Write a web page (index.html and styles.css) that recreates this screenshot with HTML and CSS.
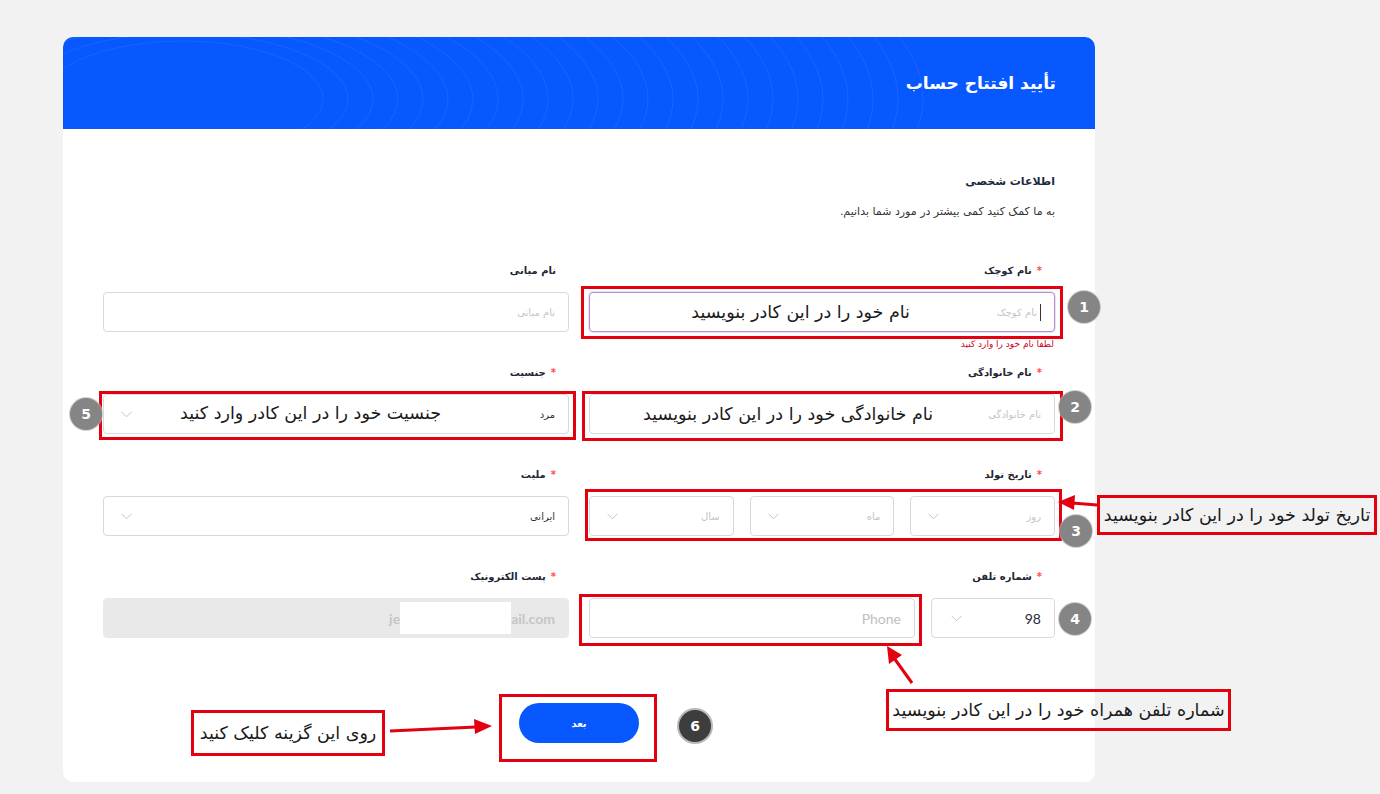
FILE: index.html
```html
<!DOCTYPE html>
<html lang="fa">
<head>
<meta charset="utf-8">
<title>تأیید افتتاح حساب</title>
<link rel="stylesheet" href="styles.css">
</head>
<body>
<div class="page">
  <main class="card">
    <header class="card-head">
      <svg class="waves" width="1032" height="92" viewBox="0 0 1032 92" aria-hidden="true">
        <g fill="none" stroke="#ffffff" stroke-opacity="0.07" stroke-width="1">
          <ellipse cx="120" cy="62" rx="140" ry="58"/>
          <ellipse cx="120" cy="62" rx="165" ry="66"/>
          <ellipse cx="120" cy="62" rx="190" ry="74"/>
          <ellipse cx="120" cy="62" rx="215" ry="82"/>
          <ellipse cx="120" cy="62" rx="240" ry="90"/>
          <ellipse cx="120" cy="62" rx="265" ry="98"/>
          <ellipse cx="120" cy="62" rx="290" ry="106"/>
          <ellipse cx="120" cy="62" rx="315" ry="114"/>
          <ellipse cx="120" cy="62" rx="340" ry="122"/>
          <ellipse cx="120" cy="62" rx="365" ry="130"/>
          <ellipse cx="120" cy="62" rx="390" ry="138"/>
          <ellipse cx="120" cy="62" rx="415" ry="146"/>
          <ellipse cx="120" cy="62" rx="440" ry="154"/>
          <ellipse cx="120" cy="62" rx="465" ry="162"/>
          <ellipse cx="120" cy="62" rx="490" ry="170"/>
          <ellipse cx="120" cy="62" rx="515" ry="178"/>
          <ellipse cx="120" cy="62" rx="540" ry="186"/>
          <ellipse cx="120" cy="62" rx="565" ry="194"/>
          <ellipse cx="120" cy="62" rx="590" ry="202"/>
          <ellipse cx="120" cy="62" rx="615" ry="210"/>
          <ellipse cx="120" cy="62" rx="640" ry="218"/>
          <ellipse cx="120" cy="62" rx="665" ry="226"/>
          <ellipse cx="120" cy="62" rx="690" ry="234"/>
          <ellipse cx="120" cy="62" rx="715" ry="242"/>
          <ellipse cx="120" cy="62" rx="740" ry="250"/>
        </g>
      </svg>
      <h1>تأیید افتتاح حساب</h1>
    </header>

    <section class="card-body">
      <h2>اطلاعات شخصی</h2>
      <p class="lead">به ما کمک کنید کمی بیشتر در مورد شما بدانیم.</p>

      <div class="grid">
        <div class="field">
          <label class="label"><span class="req">*</span>نام کوچک</label>
          <div class="ctl focus"><span class="caret"></span><span class="ph">نام کوچک</span></div>
          <div class="error">لطفا نام خود را وارد کنید</div>
        </div>
        <div class="field">
          <label class="label">نام میانی</label>
          <div class="ctl"><span class="ph">نام میانی</span></div>
        </div>

        <div class="field">
          <label class="label"><span class="req">*</span>نام خانوادگی</label>
          <div class="ctl"><span class="ph">نام خانوادگی</span></div>
        </div>
        <div class="field">
          <label class="label"><span class="req">*</span>جنسیت</label>
          <div class="ctl sel"><span class="val">مرد</span><svg class="chev" width="11" height="7" viewBox="0 0 11 7"><path d="M0.5 0.8l5 5 5-5" fill="none" stroke="#c4c4c4" stroke-width="1"/></svg></div>
        </div>

        <div class="field">
          <label class="label"><span class="req">*</span>تاریخ تولد</label>
          <div class="date">
            <div class="ctl sel"><span class="ph">روز</span><svg class="chev" width="11" height="7" viewBox="0 0 11 7"><path d="M0.5 0.8l5 5 5-5" fill="none" stroke="#c4c4c4" stroke-width="1"/></svg></div>
            <div class="ctl sel"><span class="ph">ماه</span><svg class="chev" width="11" height="7" viewBox="0 0 11 7"><path d="M0.5 0.8l5 5 5-5" fill="none" stroke="#c4c4c4" stroke-width="1"/></svg></div>
            <div class="ctl sel"><span class="ph">سال</span><svg class="chev" width="11" height="7" viewBox="0 0 11 7"><path d="M0.5 0.8l5 5 5-5" fill="none" stroke="#c4c4c4" stroke-width="1"/></svg></div>
          </div>
        </div>
        <div class="field">
          <label class="label"><span class="req">*</span>ملیت</label>
          <div class="ctl sel"><span class="val">ایرانی</span><svg class="chev" width="11" height="7" viewBox="0 0 11 7"><path d="M0.5 0.8l5 5 5-5" fill="none" stroke="#c4c4c4" stroke-width="1"/></svg></div>
        </div>

        <div class="field">
          <label class="label"><span class="req">*</span>شماره تلفن</label>
          <div class="phone">
            <div class="ctl sel code"><span class="num">98</span><svg class="chev" width="11" height="7" viewBox="0 0 11 7"><path d="M0.5 0.8l5 5 5-5" fill="none" stroke="#c4c4c4" stroke-width="1"/></svg></div>
            <div class="ctl tel"><span class="latin-ph">Phone</span></div>
          </div>
        </div>
        <div class="field">
          <label class="label"><span class="req">*</span>پست الکترونیک</label>
          <div class="ctl disabled"><span class="mail">je<span class="redact"></span>ail.com</span></div>
        </div>
      </div>

      <div class="actions">
        <button class="btn" type="button">بعد</button>
      </div>
    </section>
  </main>

  <div class="notes" dir="rtl">
    <svg class="arrows" width="1380" height="794" viewBox="0 0 1380 794" aria-hidden="true">
      <g stroke="#e3000f" stroke-width="3" fill="none">
        <line x1="1097" y1="505" x2="1072" y2="503"/>
        <line x1="912" y1="683" x2="894" y2="658"/>
        <line x1="390" y1="731" x2="476" y2="727"/>
      </g>
      <g fill="#e3000f">
        <polygon points="1058,502 1075,495 1074,510"/>
        <polygon points="887,646 889,664 902,655"/>
        <polygon points="492,726 474,719 475,734"/>
      </g>
    </svg>

    <div class="rbox rb1"></div>
    <div class="rbox rb2"></div>
    <div class="rbox rb5"></div>
    <div class="rbox rb3"></div>
    <div class="rbox rb4"></div>
    <div class="rbox rb6"></div>

    <div class="hint h1t">نام خود را در این کادر بنویسید</div>
    <div class="hint h2t">نام خانوادگی خود را در این کادر بنویسید</div>
    <div class="hint h5t">جنسیت خود را در این کادر وارد کنید</div>

    <div class="rbox callout c3">تاریخ تولد خود را در این کادر بنویسید</div>
    <div class="rbox callout c4">شماره تلفن همراه خود را در این کادر بنویسید</div>
    <div class="rbox callout c6">روی این گزینه کلیک کنید</div>

    <div class="badge b1">1</div>
    <div class="badge b2">2</div>
    <div class="badge b3">3</div>
    <div class="badge b4">4</div>
    <div class="badge b5">5</div>
    <div class="badge dark b6">6</div>
  </div>
</div>
</body>
</html>
```

FILE: styles.css
```css
* { box-sizing: border-box; }

body {
  margin: 0;
  background: #f2f2f2;
  font-family: "DejaVu Sans", "Noto Sans", sans-serif;
}

.page {
  position: relative;
  width: 1380px;
  height: 794px;
  padding: 37px 0 0 63px;
  overflow: hidden;
}

.card {
  width: 1032px;
  height: 745px;
  background: #ffffff;
  border-radius: 10px;
  overflow: hidden;
  direction: rtl;
}

.card-head {
  position: relative;
  height: 92px;
  background: #0759ff;
  display: flex;
  align-items: center;
  padding: 0 39px;
}

.waves {
  position: absolute;
  left: 0;
  top: 0;
}

.card-head h1 {
  position: relative;
  margin: 0;
  color: #ffffff;
  font-size: 17px;
  font-weight: bold;
}

.card-body {
  padding: 43px 40px 39px;
}

.card-body h2 {
  margin: 0;
  font-size: 11px;
  line-height: 20px;
  font-weight: bold;
  color: #1b2a3c;
}

.lead {
  margin: 12px 0 0;
  font-size: 11px;
  line-height: 16px;
  color: #333333;
}

.grid {
  margin-top: 41px;
  display: grid;
  grid-template-columns: 466px 466px;
  column-gap: 20px;
  row-gap: 31px;
}

.label {
  display: block;
  font-size: 10px;
  font-weight: bold;
  line-height: 20px;
  color: #1f2733;
  padding-right: 13px;
  margin-bottom: 11px;
}

.req {
  color: #ff4d4f;
  margin-left: 5px;
}

.ctl {
  height: 40px;
  border: 1px solid #d9d9d9;
  border-radius: 4px;
  background: #ffffff;
  display: flex;
  align-items: center;
  padding: 0 13px 0 17px;
  font-size: 10px;
  color: #bfbfbf;
}

.ctl.focus {
  border-color: #b98bd0;
  box-shadow: 0 0 0 1px rgba(185, 139, 208, 0.25);
}

.caret {
  width: 1px;
  height: 17px;
  background: #333333;
  margin-left: 3px;
}

.ph { color: #c4c4c4; }

.val { color: #333333; }

.chev { margin-right: auto; }

.error {
  font-size: 9px;
  line-height: 14px;
  height: 14px;
  margin-top: 5px;
  margin-bottom: -19px;
  color: #d0021b;
  padding-right: 1px;
}

.date {
  display: flex;
  gap: 16px;
}

.date .ctl { flex: 1; }

.phone {
  display: flex;
  gap: 16px;
}

.phone .code {
  width: 124px;
  flex: none;
  padding-left: 19px;
}

.phone .tel { flex: 1; }

.num {
  font-family: "Lato", sans-serif;
  font-size: 14px;
  color: #1d2b3a;
}

.latin-ph {
  font-family: "Lato", sans-serif;
  font-size: 14px;
  color: #c0c0c0;
}

.ctl.disabled {
  background: #e9e9e9;
  border-color: #e9e9e9;
}

.mail {
  direction: ltr;
  display: flex;
  align-items: center;
  font-family: "Lato", sans-serif;
  font-size: 14px;
  font-weight: bold;
  color: #c6c6c6;
}

.redact {
  display: inline-block;
  width: 111px;
  height: 32px;
  background: #ffffff;
}

.actions {
  display: flex;
  justify-content: center;
  margin-top: 65px;
}

.btn {
  width: 120px;
  height: 40px;
  border: 0;
  border-radius: 20px;
  background: #0759ff;
  color: #ffffff;
  font-family: "DejaVu Sans", sans-serif;
  font-size: 10px;
  font-weight: bold;
}

/* annotation layer */
.notes {
  position: absolute;
  left: 0;
  top: 0;
  width: 1380px;
  height: 794px;
  pointer-events: none;
}

.arrows {
  position: absolute;
  left: 0;
  top: 0;
}

.rbox {
  position: absolute;
  border: 3px solid #e3000f;
}

.rb1 { left: 581px; top: 286px; width: 482px; height: 53px; }
.rb2 { left: 582px; top: 391px; width: 481px; height: 50px; }
.rb5 { left: 99px;  top: 391px; width: 477px; height: 49px; }
.rb3 { left: 585px; top: 489px; width: 477px; height: 52px; }
.rb4 { left: 579px; top: 594px; width: 343px; height: 52px; }
.rb6 { left: 499px; top: 694px; width: 158px; height: 68px; }

.hint {
  position: absolute;
  font-family: "DejaVu Sans", sans-serif;
  font-size: 17.5px;
  line-height: 24px;
  color: #1a1a1a;
  white-space: nowrap;
}

.h1t { right: 470px; top: 300px; }
.h2t { right: 447px; top: 402px; }
.h5t { right: 939px; top: 401px; }

.callout {
  display: flex;
  align-items: center;
  justify-content: center;
  font-family: "DejaVu Sans", sans-serif;
  font-size: 17.5px;
  color: #1a1a1a;
  white-space: nowrap;
}

.c3 { left: 1097px; top: 495px; width: 280px; height: 40px; }
.c4 { left: 886px;  top: 689px; width: 345px; height: 42px; }
.c6 { left: 191px;  top: 710px; width: 194px; height: 46px; }

.badge {
  position: absolute;
  width: 32px;
  height: 32px;
  border-radius: 50%;
  background: #858585;
  color: #ffffff;
  font-family: "DejaVu Sans", sans-serif;
  font-size: 14px;
  font-weight: bold;
  display: flex;
  align-items: center;
  justify-content: center;
  box-shadow: 0 0 0 1px rgba(190, 190, 190, 0.7);
}

.badge.dark {
  background: #3d3d3d;
  box-shadow: 0 0 0 2px #b8b8b8;
}

.b1 { left: 1068px; top: 291px; }
.b2 { left: 1059px; top: 391px; }
.b3 { left: 1060px; top: 515px; }
.b4 { left: 1059px; top: 603px; }
.b5 { left: 70px;   top: 398px; }
.b6 { left: 679px;  top: 710px; }
```
